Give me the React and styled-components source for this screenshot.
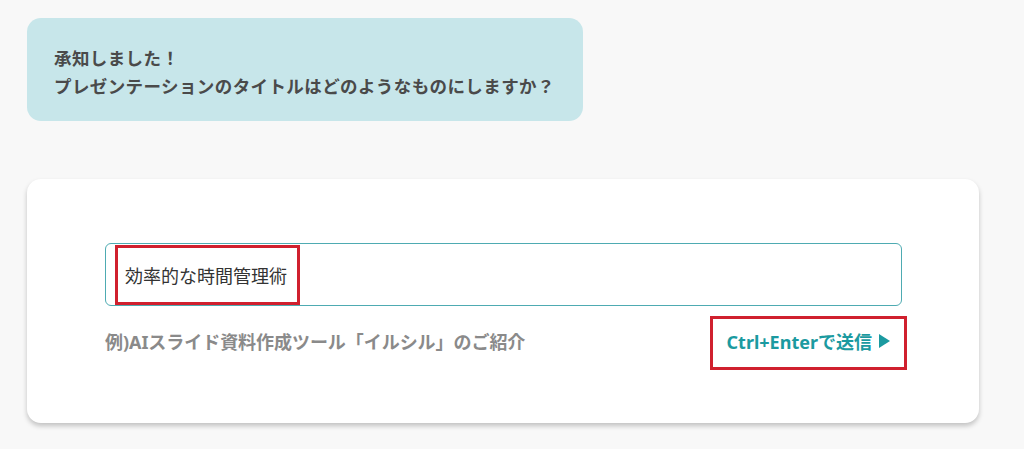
import styled, { createGlobalStyle } from 'styled-components'

const GlobalStyle = createGlobalStyle`
  html, body {
    margin: 0;
    padding: 0;
    background: #f8f8f8;
    font-family: "Noto Sans", "Noto Sans CJK JP", sans-serif;
  }
`

const Page = styled.div`
  width: 1024px;
  height: 449px;
  padding: 18px 0 0 27px;
  box-sizing: border-box;
  display: flex;
  flex-direction: column;
  align-items: flex-start;
  gap: 58px;
`

const Bubble = styled.div`
  width: 556px;
  height: 103px;
  box-sizing: border-box;
  background: #c7e6ea;
  border-radius: 14px;
  padding: 26px 27px 0;
  color: #4a4a4a;
  font-size: 17.5px;
  font-weight: 700;
  line-height: 28px;
  letter-spacing: 0.4px;
`

const Card = styled.div`
  width: 952px;
  height: 244px;
  box-sizing: border-box;
  background: #fff;
  border-radius: 14px;
  box-shadow: 0 3px 5px rgba(0, 0, 0, 0.22);
  padding: 64px 77px 0 78px;
  display: flex;
  flex-direction: column;
`

const InputBox = styled.div`
  height: 63px;
  box-sizing: border-box;
  border: 1px solid #4eabb2;
  border-radius: 6px;
  display: flex;
  align-items: stretch;
  padding: 1px 0 0 9px;
`

const Marked = styled.div`
  border: 3px solid #d0202e;
  box-sizing: border-box;
  display: flex;
  align-items: center;
  padding: 0 10px 0 7px;
`

const Value = styled.span`
  font-size: 18px;
  color: #333;
`

const Footer = styled.div`
  display: flex;
  justify-content: space-between;
  align-items: center;
  margin-top: 10px;
`

const Hint = styled.span`
  font-size: 18px;
  font-weight: 700;
  color: #8a8a8a;
  letter-spacing: -0.05px;
  padding-bottom: 4px;
`

const SendBox = styled(Marked)`
  height: 54px;
  margin-right: -5px;
  padding: 0 14px 4px 14px;
`

const Send = styled.span`
  font-size: 18px;
  font-weight: 700;
  color: #1b9aa0;
  display: flex;
  align-items: center;
  gap: 7px;
`

export default function App() {
  return <>
    <GlobalStyle />
    <Page>
      <Bubble>
        承知しました！<br />
        プレゼンテーションのタイトルはどのようなものにしますか？
      </Bubble>
      <Card>
        <InputBox>
          <Marked>
            <Value>効率的な時間管理術</Value>
          </Marked>
        </InputBox>
        <Footer>
          <Hint>例)AIスライド資料作成ツール「イルシル」のご紹介</Hint>
          <SendBox>
            <Send>
              Ctrl+Enterで送信
              <svg width="11" height="14" viewBox="0 0 11 14">
                <path d="M0 0 L11 7 L0 14 Z" fill="#1b9aa0" />
              </svg>
            </Send>
          </SendBox>
        </Footer>
      </Card>
    </Page>
  </>
}
